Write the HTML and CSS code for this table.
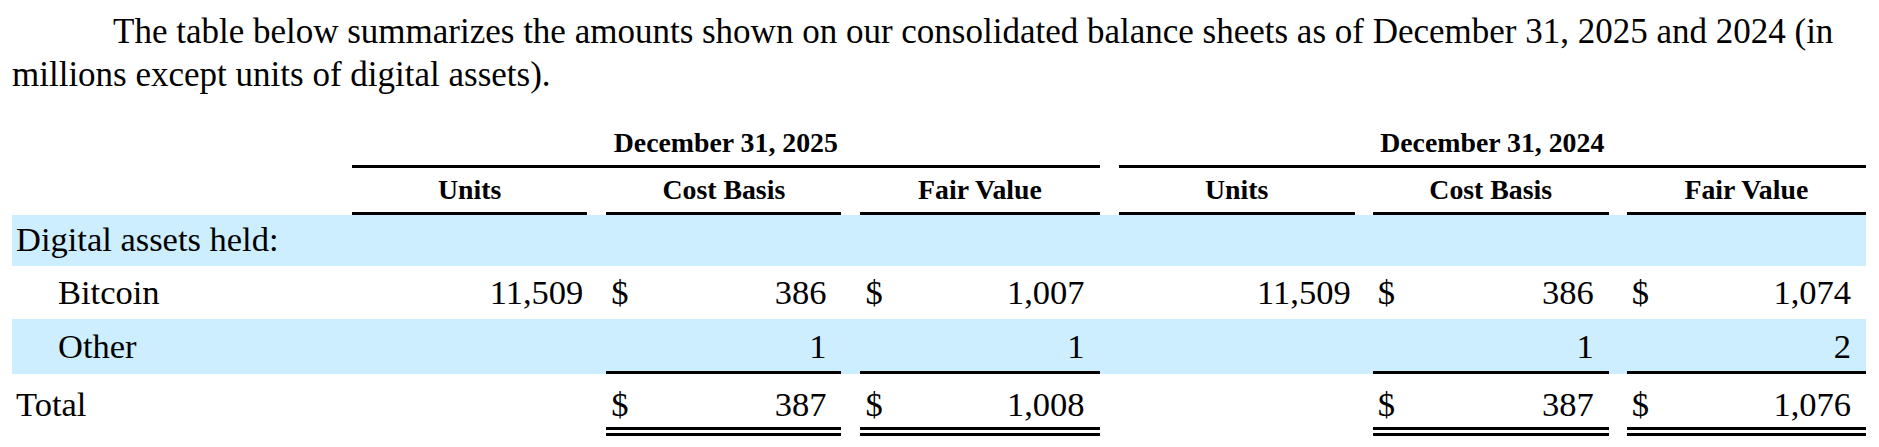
FILE: index.html
```html
<!DOCTYPE html>
<html lang="en">
<head>
<meta charset="utf-8">
<title>Digital assets held</title>
<link rel="stylesheet" href="styles.css">
</head>
<body>
<div class="page">
  <p class="intro">The table below summarizes the amounts shown on our consolidated balance sheets as of December 31, 2025 and 2024 (in millions except units of digital assets).</p>
  <table class="fin">
    <colgroup>
      <col class="c-label">
      <col class="c-units"><col class="c-gap"><col class="c-num"><col class="c-gap"><col class="c-fv">
      <col class="c-gap">
      <col class="c-units2"><col class="c-gap2"><col class="c-num2"><col class="c-gap2"><col class="c-fv">
    </colgroup>
    <thead>
      <tr class="period">
        <th></th>
        <th colspan="5" class="grp">December 31, 2025</th>
        <th></th>
        <th colspan="5" class="grp">December 31, 2024</th>
      </tr>
      <tr class="cols">
        <th></th>
        <th class="sub">Units</th><th></th>
        <th class="sub">Cost Basis</th><th></th>
        <th class="sub">Fair Value</th><th></th>
        <th class="sub">Units</th><th></th>
        <th class="sub">Cost Basis</th><th></th>
        <th class="sub">Fair Value</th>
      </tr>
    </thead>
    <tbody>
      <tr class="shade r-head">
        <td class="lbl">Digital assets held:</td>
        <td></td><td></td><td></td><td></td><td></td><td></td><td></td><td></td><td></td><td></td><td></td>
      </tr>
      <tr class="r-btc">
        <td class="lbl indent">Bitcoin</td>
        <td class="units">11,509</td><td></td>
        <td class="num"><span class="cur">$</span>386</td><td></td>
        <td class="num"><span class="cur">$</span>1,007</td><td></td>
        <td class="units">11,509</td><td></td>
        <td class="num"><span class="cur">$</span>386</td><td></td>
        <td class="num"><span class="cur">$</span>1,074</td>
      </tr>
      <tr class="shade r-other">
        <td class="lbl indent">Other</td>
        <td class="units"></td><td></td>
        <td class="num rule">1</td><td></td>
        <td class="num rule">1</td><td></td>
        <td class="units"></td><td></td>
        <td class="num rule">1</td><td></td>
        <td class="num rule">2</td>
      </tr>
      <tr class="r-total">
        <td class="lbl">Total</td>
        <td class="units"></td><td></td>
        <td class="num dbl"><span class="cur">$</span>387</td><td></td>
        <td class="num dbl"><span class="cur">$</span>1,008</td><td></td>
        <td class="units"></td><td></td>
        <td class="num dbl"><span class="cur">$</span>387</td><td></td>
        <td class="num dbl"><span class="cur">$</span>1,076</td>
      </tr>
    </tbody>
  </table>
</div>
</body>
</html>
```
FILE: styles.css
```css
html, body {
  margin: 0;
  padding: 0;
  background: #ffffff;
}

body {
  font-family: "Liberation Serif", "Times New Roman", serif;
  color: #000000;
}

.page {
  padding: 10px 13px 0 12px;
}

.intro {
  margin: 0 0 31px 0;
  font-size: 35px;
  line-height: 43px;
  text-indent: 101px;
}

.fin {
  width: 1854px;
  table-layout: fixed;
  border-collapse: separate;
  border-spacing: 0;
  font-size: 34.5px;
}

.c-label { width: 340px; }
.c-units { width: 235px; }
.c-num { width: 235px; }
.c-fv { width: 239px; }
.c-gap { width: 19px; }
.c-units2 { width: 236px; }
.c-num2 { width: 236px; }
.c-gap2 { width: 18px; }

.fin th,
.fin td {
  padding: 0;
  vertical-align: baseline;
}

.fin th {
  font-weight: bold;
  font-size: 27.8px;
  text-align: center;
}

.period th {
  line-height: 31px;
  padding-bottom: 7px;
}

.period .grp {
  border-bottom: 3px solid #000;
}

.cols th {
  line-height: 44px;
}

.cols .sub {
  border-bottom: 3px solid #000;
}

.fin td {
  line-height: 38px;
  white-space: nowrap;
}

.shade td {
  background: #cceeff;
}

.lbl {
  text-align: left;
  padding-left: 4px !important;
}

.lbl.indent {
  padding-left: 46px !important;
}

.units {
  text-align: right;
  padding-right: 4px !important;
}

.num {
  text-align: right;
  padding-right: 15px !important;
  padding-left: 5px !important;
}

.cur {
  float: left;
}

.rule {
  border-bottom: 3px solid #000;
}

.dbl {
  border-bottom: 9px double #000;
}

.r-head td {
  padding-top: 5px;
  padding-bottom: 8px;
}

.r-btc td {
  padding-top: 7px;
  padding-bottom: 8px;
}

.r-other td {
  padding-top: 8px;
  padding-bottom: 6px;
}

.r-total td {
  padding-top: 11px;
  padding-bottom: 4px;
}
```
